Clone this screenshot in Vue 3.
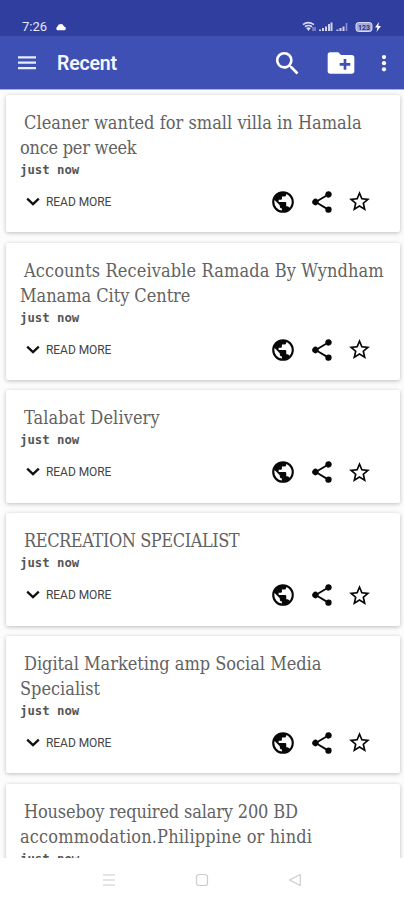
<template>
  <div class="phone">
    <div class="status-bar">
      <span class="time">7:26</span>
      <svg class="cloud" width="12" height="8" viewBox="0 0 12 8"><path d="M2.2 7.2a2 2 0 0 1 .1-3.4A3.5 3.5 0 0 1 9 3.4a2 2 0 0 1 .7 3.8z" fill="#fff" /></svg>
      <svg class="signals" width="82" height="14" viewBox="0 0 82 14">
        <g fill="none" stroke="#d5daf3" stroke-width="1.7">
          <path d="M1 4.6q5-4 11 0M3 6.8q3.5-2.6 7 0" />
        </g>
        <path d="M4.2 8q2.3-1.6 4.6 0L6.5 11z" fill="#d5daf3" />
        <path d="M11 7v4M13 7v4" stroke="#aab3e3" stroke-width="1" />
        <path d="M18 11V9.5M21 11V8M24 11V6.5M27 11V4M29.5 11V2.5" stroke="#cdd3f0" stroke-width="2" />
        <path d="M35.5 11V9.5M38.5 11V8M41.5 11V6.5" stroke="#cdd3f0" stroke-width="2" />
        <path d="M44.5 11V3" stroke="#8792d2" stroke-width="1.6" />
        <rect x="54" y="2.5" width="16" height="9" rx="2.5" fill="#a3acdd" stroke="#d5daf3" />
        <text x="62" y="9.8" text-anchor="middle" class="battery">123</text>
        <path d="M77 2l-4 5.6h2.5L74.5 12l4.500-6h-2.7z" fill="#fff" />
      </svg>
    </div>

    <header class="app-bar">
      <svg class="menu" width="20" height="16" viewBox="0 0 20 16"><path d="M1 2.3h18M1 7.7h18M1 13.1h18" stroke="#e9ecfb" stroke-width="2.2" /></svg>
      <h1>Recent</h1>
      <svg class="search" width="31" height="31" viewBox="0 0 24 24"><path d="M15.5 14h-.79l-.28-.27A6.47 6.47 0 0 0 16 9.5 6.5 6.5 0 1 0 9.5 16c1.61 0 3.09-.59 4.23-1.57l.27.28v.79l5 4.99L20.49 19l-4.99-5zm-6 0a4.5 4.5 0 1 1 0-9 4.5 4.5 0 0 1 0 9z" /></svg>
      <svg class="folder" width="32" height="32" viewBox="0 0 24 24"><path d="M20 6h-8l-2-2H4a2 2 0 0 0-1.99 2L2 18a2 2 0 0 0 2 2h16a2 2 0 0 0 2-2V8a2 2 0 0 0-2-2zm-1 8h-3v3h-2v-3h-3v-2h3V9h2v3h3v2z" /></svg>
      <svg class="more" width="6" height="20" viewBox="0 0 6 20"><circle cx="3" cy="4.1" r="2.1" /><circle cx="3" cy="10.2" r="2.1" /><circle cx="3" cy="16.3" r="2.1" /></svg>
    </header>

    <main class="list">
      <article v-for="job in jobs" :key="job.lines[0].text" class="card">
        <h2>
          <span v-for="line in job.lines" :key="line.text" class="line" :style="{ letterSpacing: line.spacing + 'px' }">{{ line.text }}</span>
        </h2>
        <p class="posted">just now</p>
        <div class="actions">
          <svg class="chevron" width="14" height="10" viewBox="0 0 14 10"><path d="M1.2 1.7L7 7.2 12.8 1.7" fill="none" stroke="#111" stroke-width="2.3" /></svg>
          <span class="read">READ MORE</span>
          <svg class="icon" width="26" height="26" viewBox="0 0 24 24"><path d="M12 2a10 10 0 1 0 0 20 10 10 0 0 0 0-20zm-1 17.93A7.99 7.99 0 0 1 4 12c0-.62.08-1.21.21-1.79L9 15v1a2 2 0 0 0 2 2v1.93zm6.9-2.54A2 2 0 0 0 16 16h-1v-3a1 1 0 0 0-1-1H8v-2h2a1 1 0 0 0 1-1V7h2a2 2 0 0 0 2-2v-.41a7.98 7.98 0 0 1 2.9 12.8z" /></svg>
          <svg class="icon" width="26" height="26" viewBox="0 0 24 24"><path d="M18 16.08c-.76 0-1.44.3-1.96.77L8.91 12.7c.05-.23.09-.46.09-.7s-.04-.47-.09-.7l7.05-4.11A3 3 0 1 0 15 5c0 .24.04.47.09.7L8.04 9.81a3 3 0 1 0 0 4.38l7.12 4.16a2.92 2.92 0 1 0 2.84-2.27z" /></svg>
          <svg class="icon" width="25" height="25" viewBox="0 0 24 24"><path d="M22 9.24l-7.19-.62L12 2 9.19 8.63 2 9.24l5.46 4.73L5.82 21 12 17.27 18.18 21l-1.63-7.03L22 9.24zM12 15.4l-3.76 2.27 1-4.28-3.32-2.88 4.38-.38L12 6.1l1.71 4.04 4.38.38-3.32 2.88 1 4.28L12 15.4z" /></svg>
        </div>
      </article>
    </main>

    <nav class="nav-bar">
      <svg width="14" height="14" viewBox="0 0 14 14"><path d="M1 2h12M1 7h12M1 12h12" /></svg>
      <svg width="14" height="14" viewBox="0 0 14 14"><rect x="1.5" y="1.5" width="11" height="11" rx="2.5" /></svg>
      <svg width="14" height="14" viewBox="0 0 14 14"><path d="M12.3 1.5v11L1.5 7z" stroke-linejoin="round" /></svg>
    </nav>
  </div>
</template>

<script setup>
const jobs = [
  { lines: [{ text: 'Cleaner wanted for small villa in Hamala', spacing: 0.03 }, { text: 'once per week', spacing: -0.25 }] },
  { lines: [{ text: 'Accounts Receivable Ramada By Wyndham', spacing: 0.12 }, { text: 'Manama City Centre', spacing: -0.04 }] },
  { lines: [{ text: 'Talabat Delivery', spacing: 0.1 }] },
  { lines: [{ text: 'RECREATION SPECIALIST', spacing: -0.43 }] },
  { lines: [{ text: 'Digital Marketing amp Social Media', spacing: -0.02 }, { text: 'Specialist', spacing: 0 }] },
  { lines: [{ text: 'Houseboy required salary 200 BD', spacing: -0.15 }, { text: 'accommodation.Philippine or hindi', spacing: 0.15 }] }
]
</script>

<style>
body { margin: 0; background: #fff; }
</style>

<style scoped>
.phone { width: 404px; height: 900px; display: flex; flex-direction: column; overflow: hidden; background: #fcfcfc; font-family: Roboto, sans-serif; }
.status-bar { height: 36px; flex: none; display: flex; align-items: flex-start; box-sizing: border-box; padding: 19px 20px 0 22px; background: #303e9f; color: #e6e9f8; }
.time { width: 33px; font-size: 13px; line-height: 16px; }
.cloud { margin-top: 4px; }
.signals { margin: 1px 0 0 auto; }
.battery { font-size: 7px; font-weight: 700; fill: #26337f; }
.app-bar { height: 54px; flex: none; display: flex; align-items: center; box-sizing: border-box; padding: 1px 17px 0; background: #3f50b5; border-bottom: 1px solid #aab3e0; }
.app-bar svg { fill: #fff; }
.app-bar h1 { margin: 1px 0 0 20px; font-size: 19.5px; font-weight: 600; line-height: 24px; letter-spacing: -0.2px; color: #f5f6fd; }
.search { margin-left: auto; }
.folder { margin-left: 22px; }
.more { margin-left: 24px; }
.list { flex: 1; min-height: 0; overflow: hidden; display: flex; flex-direction: column; gap: 10.25px; padding: 5px 4px 0 6px; }
.card { flex: none; box-sizing: border-box; padding: 14.9px 14px 17.6px; background: #fff; border-radius: 2px; box-shadow: 0 1px 4px rgba(0, 0, 0, 0.25); }
.card h2 { margin: 0; font-family: "DejaVu Serif Condensed", "DejaVu Serif", serif; font-stretch: condensed; font-size: 18px; font-weight: 400; line-height: 25px; color: #626262; }
.line { display: block; white-space: nowrap; }
.line:first-child { padding-left: 4px; }
.posted { margin: 0; font-family: "DejaVu Sans Mono", monospace; font-size: 12.3px; font-weight: 700; line-height: 20px; color: #555; }
.actions { height: 26px; margin-top: 9px; display: flex; align-items: center; padding: 0 14px 0 6px; }
.read { margin: 0 auto 0 6px; font-size: 12px; line-height: 16px; letter-spacing: -0.05px; color: #444; }
.icon { margin-left: 12.5px; fill: #080808; }
.nav-bar { height: 42px; flex: none; display: flex; align-items: center; justify-content: center; gap: 79px; padding-top: 2px; box-sizing: border-box; background: #fff; }
.nav-bar svg { fill: none; stroke: #ccc; stroke-width: 1.2; }
</style>
